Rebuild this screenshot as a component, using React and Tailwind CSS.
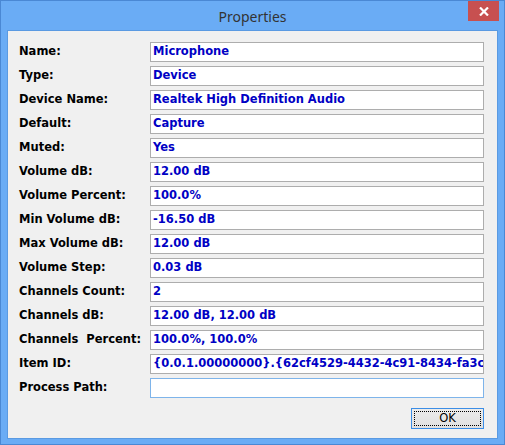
import React from 'react';

const rows = [
  ['Name:', 'Microphone'],
  ['Type:', 'Device'],
  ['Device Name:', 'Realtek High Definition Audio'],
  ['Default:', 'Capture'],
  ['Muted:', 'Yes'],
  ['Volume dB:', '12.00 dB'],
  ['Volume Percent:', '100.0%'],
  ['Min Volume dB:', '-16.50 dB'],
  ['Max Volume dB:', '12.00 dB'],
  ['Volume Step:', '0.03 dB'],
  ['Channels Count:', '2'],
  ['Channels dB:', '12.00 dB, 12.00 dB'],
  ['Channels  Percent:', '100.0%, 100.0%'],
  ['Item ID:', '{0.0.1.00000000}.{62cf4529-4432-4c91-8434-fa3c22e3a8f1}'],
  ['Process Path:', ''],
];

const font = { fontFamily: '"DejaVu Sans", "Liberation Sans", sans-serif' };

const Row = ({ label, value, focused }) => (
  <div className="flex items-center h-[20px]">
    <div className="w-[131px] whitespace-pre text-[11.5px] font-bold text-black leading-none">
      {label}
    </div>
    <div
      className={`w-[334px] h-[20px] bg-white border flex items-center pl-[2px] overflow-hidden whitespace-nowrap text-[11.5px] font-bold text-[#0000c4] leading-none ${
        focused ? 'border-[#7eb4ea]' : 'border-[#adadad]'
      }`}
    >
      {value}
    </div>
  </div>
);

export default function App() {
  return (
    <div className="w-[505px] h-[445px] bg-[#6aacf5] border border-[#4a88d4] flex flex-col" style={font}>
      <div className="h-[29px] flex relative">
        <div
          className="flex-1 flex items-center justify-center text-[14px] text-[#333333] pt-[2px]"
          style={{ fontFamily: '"Noto Sans", "Open Sans", sans-serif' }}
        >
          Properties
        </div>
        <div className="absolute right-[5px] top-0 w-[31px] h-[20px] bg-[#c75050] flex items-center justify-center">
          <svg width="10" height="9" viewBox="0 0 10 9">
            <path d="M1 0.5 L9 8.5 M9 0.5 L1 8.5" stroke="#ffffff" strokeWidth="2.2" />
          </svg>
        </div>
      </div>
      <div className="mx-[6px] h-[409px] border border-[#5a9ae2] bg-[#f0f0f0] pl-[11px] pt-[11px] flex flex-col">
        <div className="flex flex-col gap-[4px]">
          {rows.map(([l, v], i) => (
            <Row key={i} label={l} value={v} focused={i === rows.length - 1} />
          ))}
        </div>
        <div className="flex justify-end w-[465px] mt-[10px]">
          <button className="w-[73px] h-[21px] border border-[#3c8ee6] bg-gradient-to-b from-[#ececec] to-[#e0e0e0] p-[2px]">
            <div
              className="w-full h-full border border-dotted border-black flex items-center justify-center text-[11.5px] text-black leading-none"
              style={{ fontFamily: '"DejaVu Sans", "Liberation Sans", sans-serif' }}
            >
              OK
            </div>
          </button>
        </div>
      </div>
    </div>
  );
}
